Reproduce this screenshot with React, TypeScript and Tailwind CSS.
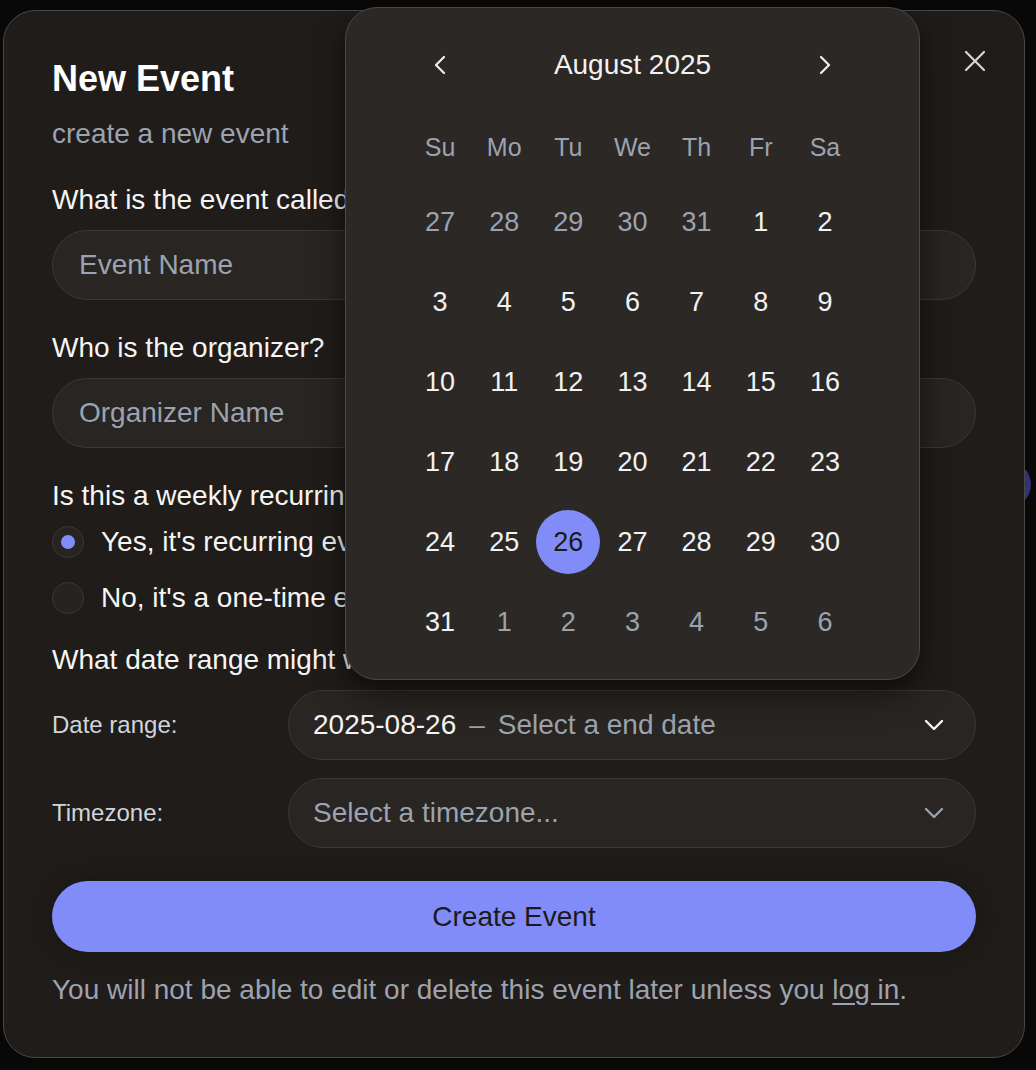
import React from 'react';

const FONT = { fontFamily: '"Liberation Sans", Arial, Helvetica, sans-serif' };

const WEEKDAYS = ['Su', 'Mo', 'Tu', 'We', 'Th', 'Fr', 'Sa'];

type Day = { n: number; out?: boolean; selected?: boolean };

function buildDays(): Day[] {
  const days: Day[] = [27, 28, 29, 30, 31].map(n => ({ n, out: true }));
  for (let n = 1; n <= 31; n++) days.push({ n, selected: n === 26 });
  for (let n = 1; n <= 6; n++) days.push({ n, out: true });
  return days;
}

function ChevronDown({ className }: { className?: string }) {
  return (
    <svg width="20" height="12" viewBox="0 0 20 12" fill="none" className={className}>
      <polyline points="2,2 10,10 18,2" stroke="currentColor" strokeWidth="2.4" strokeLinecap="round" strokeLinejoin="round" />
    </svg>
  );
}

function ChevronSide({ dir }: { dir: 'left' | 'right' }) {
  return (
    <svg width="14" height="20" viewBox="0 0 14 20" fill="none">
      <polyline
        points={dir === 'left' ? '11,2 3,10 11,18' : '3,2 11,10 3,18'}
        stroke="currentColor" strokeWidth="2.2" strokeLinecap="round" strokeLinejoin="round" />
    </svg>
  );
}

function Calendar() {
  const days = buildDays();
  return (
    <div className="absolute left-[345px] top-[7px] w-[575px] h-[673px] rounded-[32px] border border-[#4b4845] bg-[#2b2826] px-[62px] pt-[25px] shadow-[0_12px_32px_rgba(0,0,0,0.55)]">
      <div className="flex items-center justify-between h-[64px] text-[#f2f2f2]">
        <div className="w-[64px] flex justify-center"><ChevronSide dir="left" /></div>
        <div className="text-[28px]">August 2025</div>
        <div className="w-[64px] flex justify-center"><ChevronSide dir="right" /></div>
      </div>
      <div className="grid grid-cols-7 mt-[26px] h-[50px] items-center">
        {WEEKDAYS.map(w => (
          <div key={w} className="text-center text-[25px] text-[#9ca3af]">{w}</div>
        ))}
      </div>
      <div className="grid grid-cols-7 mt-[9px]">
        {days.map((d, i) => (
          <div key={i} className="h-[80px] flex items-center justify-center">
            <div className={
              d.selected
                ? 'w-[64px] h-[64px] rounded-full bg-[#818cf8] text-[#1c1a18] flex items-center justify-center text-[27px]'
                : d.out
                  ? 'w-[64px] h-[64px] flex items-center justify-center text-[27px] text-[#9ca3af]'
                  : 'w-[64px] h-[64px] flex items-center justify-center text-[27px] text-[#f2f2f2]'
            }>
              {d.n}
            </div>
          </div>
        ))}
      </div>
    </div>
  );
}

function Radio({ checked, label, className }: { checked?: boolean; label: string; className?: string }) {
  return (
    <div className={`flex items-center h-[36px] ${className ?? ''}`}>
      <div className="w-[32px] h-[32px] rounded-full border border-[#3b3835] bg-[#262320] flex items-center justify-center">
        {checked && <div className="w-[14px] h-[14px] rounded-full bg-[#818cf8]" />}
      </div>
      <span className="ml-[17px] text-[28px] text-[#f5f5f5]">{label}</span>
    </div>
  );
}

export default function App() {
  return (
    <div className="relative w-[1036px] h-[1070px] bg-[#080808] overflow-hidden" style={FONT}>
      {/* page content peeking out behind the overlay */}
      <div className="absolute left-[984px] top-[461px] w-[47px] h-[47px] rounded-full bg-[#2f3474]" />

      <div className="absolute left-[3px] top-[10px] w-[1022px] h-[1048px] rounded-[32px] border border-[#4a4744] bg-[#1f1c19] pl-[48px] pr-[48px] pt-[46px]">
        <button className="absolute right-[38px] top-[39px] text-[#d6d6d6]">
          <svg width="22" height="22" viewBox="0 0 22 22" fill="none">
            <path d="M2 2L20 20M20 2L2 20" stroke="currentColor" strokeWidth="2.2" strokeLinecap="round" />
          </svg>
        </button>

        <h1 className="text-[36px] leading-[44px] font-bold text-white">New Event</h1>
        <p className="mt-[15px] text-[28px] leading-[36px] text-[#9ca3af]">create a new event</p>

        <div className="mt-[30px] text-[28px] leading-[36px] text-[#f5f5f5]">What is the event called?</div>
        <div className="mt-[12px] h-[70px] rounded-full border border-[#3b3835] bg-[#282522] pl-[26px] flex items-center text-[28px] text-[#9ca3af]">
          Event Name
        </div>

        <div className="mt-[30px] text-[28px] leading-[36px] text-[#f5f5f5]">Who is the organizer?</div>
        <div className="mt-[12px] h-[70px] rounded-full border border-[#3b3835] bg-[#282522] pl-[26px] flex items-center text-[28px] text-[#9ca3af]">
          Organizer Name
        </div>

        <div className="mt-[30px] text-[28px] leading-[36px] text-[#f5f5f5]">Is this a weekly recurring event?</div>
        <Radio checked label="Yes, it's recurring event" className="mt-[10px]" />
        <Radio label="No, it's a one-time event" className="mt-[20px]" />

        <div className="mt-[26px] text-[28px] leading-[36px] text-[#f5f5f5]">What date range might work?</div>

        <div className="mt-[12px] flex items-center">
          <div className="w-[236px] text-[24px] text-[#d1d5db]">Date range:</div>
          <div className="flex-1 h-[70px] rounded-full border border-[#3b3835] bg-[#282522] pl-[24px] pr-[31px] flex items-center text-[28px]">
            <span className="text-[#f5f5f5]">2025-08-26</span>
            <span className="mx-[13px] text-[#9ca3af]">–</span>
            <span className="text-[#9ca3af]">Select a end date</span>
            <ChevronDown className="ml-auto text-[#f5f5f5]" />
          </div>
        </div>

        <div className="mt-[18px] flex items-center">
          <div className="w-[236px] text-[24px] text-[#d1d5db]">Timezone:</div>
          <div className="flex-1 h-[70px] rounded-full border border-[#3b3835] bg-[#282522] pl-[24px] pr-[31px] flex items-center text-[28px] text-[#9ca3af]">
            <span>Select a timezone...</span>
            <ChevronDown className="ml-auto text-[#9ca3af]" />
          </div>
        </div>

        <button className="mt-[33px] w-full h-[71px] rounded-full bg-[#818cf8] text-[28px] text-[#1c1a18] shadow-[0_0_24px_rgba(0,0,0,0.25)]">
          Create Event
        </button>

        <p className="mt-[20px] text-[28px] leading-[36px] text-[#9ca3af]">
          You will not be able to edit or delete this event later unless you <span className="underline underline-offset-4">log in</span>.
        </p>
      </div>

      <Calendar />
    </div>
  );
}
